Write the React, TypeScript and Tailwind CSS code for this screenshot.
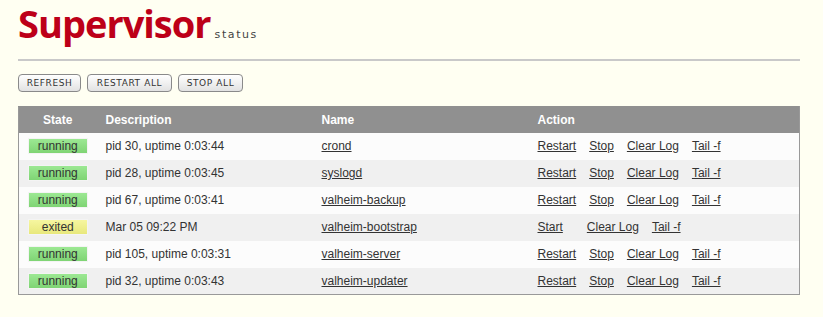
import React from "react";

type Proc = {
  state: "running" | "exited";
  desc: string;
  name: string;
};

const procs: Proc[] = [
  { state: "running", desc: "pid 30, uptime 0:03:44", name: "crond" },
  { state: "running", desc: "pid 28, uptime 0:03:45", name: "syslogd" },
  { state: "running", desc: "pid 67, uptime 0:03:41", name: "valheim-backup" },
  { state: "exited", desc: "Mar 05 09:22 PM", name: "valheim-bootstrap" },
  { state: "running", desc: "pid 105, uptime 0:03:31", name: "valheim-server" },
  { state: "running", desc: "pid 32, uptime 0:03:43", name: "valheim-updater" },
];

function Btn({ label, w }: { label: string; w: string }) {
  return (
    <button
      className={
        "h-[18px] rounded-[4px] border border-[#8a8a8a] bg-gradient-to-b from-white to-[#e2e2e2] text-[9px] leading-none tracking-[0.6px] text-center text-[#333] font-['DejaVu_Sans',sans-serif] " +
        w
      }
    >
      {label}
    </button>
  );
}

function A({ children, cls = "" }: { children: React.ReactNode; cls?: string }) {
  return (
    <a href="#" className={"underline text-[#333] " + cls}>
      {children}
    </a>
  );
}

export default function App() {
  return (
    <div className="min-h-screen bg-[#fffff2] font-['Liberation_Sans',Arial,sans-serif] text-[12px] text-[#333]">
      <div className="ml-[18px] w-[782px]">
        {/* ==== LOGO ==== */}
        <div className="flex items-baseline h-[59px]">
          <span className="-mt-[3px] font-['Open_Sans',sans-serif] font-bold text-[38px] leading-[52px] tracking-[-1px] text-[#bd0018]">
            Supervisor
          </span>
          <span className="ml-[4px] font-['DejaVu_Sans',sans-serif] text-[11px] tracking-[1.6px] text-[#444]">
            status
          </span>
        </div>
        <div className="border-t-2 border-[#c9c9c9]" />

        {/* ==== BUTTONS ==== */}
        <div className="flex gap-[6px] mt-[13px]">
          <Btn label="REFRESH" w="w-[63px]" />
          <Btn label="RESTART ALL" w="w-[85px]" />
          <Btn label="STOP ALL" w="w-[65px]" />
        </div>

        {/* ==== TABLE ==== */}
        <table className="mt-[14px] w-full table-fixed border-collapse border border-[#999] border-t-[#909090]">
          <colgroup>
            <col className="w-[78px]" />
            <col className="w-[216px]" />
            <col className="w-[216px]" />
            <col />
          </colgroup>
          <thead>
            <tr className="bg-[#909090] text-white font-bold h-[26px]">
              <th className="text-center font-bold">State</th>
              <th className="text-left pl-[9px] font-bold">Description</th>
              <th className="text-left pl-[9px] font-bold">Name</th>
              <th className="text-left pl-[9px] font-bold">Action</th>
            </tr>
          </thead>
          <tbody>
            {procs.map((p, i) => (
              <tr key={i} className={(i % 2 ? "bg-[#f0f0f0]" : "bg-[#fcfcfc]") + " h-[27px]"}>
                <td className="px-0">
                  <div
                    className={
                      "mx-auto w-[60px] h-[16px] leading-[14px] text-center border border-[#f4f4f4] text-[#333] " +
                      (p.state === "running"
                        ? "bg-gradient-to-b from-[#9ce893] to-[#7fd474]"
                        : "bg-gradient-to-b from-[#f6f6a0] to-[#e8e87c]")
                    }
                  >
                    {p.state}
                  </div>
                </td>
                <td className="pl-[9px]">{p.desc}</td>
                <td className="pl-[9px]">
                  <A>{p.name}</A>
                </td>
                <td className="pl-[9px]">
                  {p.state === "running" ? (
                    <>
                      <A cls="mr-[13px]">Restart</A>
                      <A cls="mr-[13px]">Stop</A>
                      <A cls="mr-[13px]">Clear Log</A>
                      <A>Tail -f</A>
                    </>
                  ) : (
                    <>
                      <A cls="mr-[24px]">Start</A>
                      <A cls="mr-[13px]">Clear Log</A>
                      <A>Tail -f</A>
                    </>
                  )}
                </td>
              </tr>
            ))}
          </tbody>
        </table>
      </div>
    </div>
  );
}
